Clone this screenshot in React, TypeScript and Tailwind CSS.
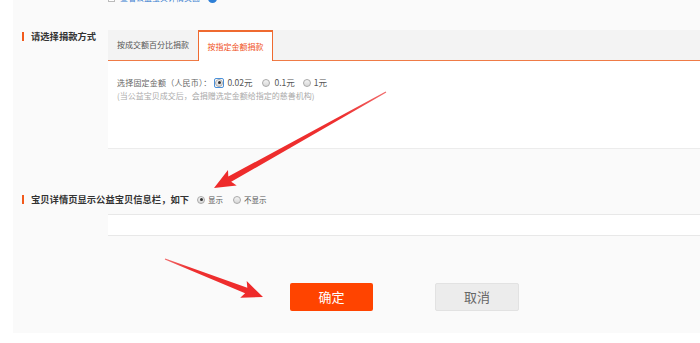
import React from "react";

const font = { fontFamily: '"Noto Sans CJK SC", "Noto Sans", sans-serif' };

function arrowPoints(tx: number, ty: number, hx: number, hy: number, head: number, bw: number, hw: number) {
  const dx = hx - tx;
  const dy = hy - ty;
  const len = Math.sqrt(dx * dx + dy * dy);
  const ux = dx / len;
  const uy = dy / len;
  const nx = -uy;
  const ny = ux;
  const bx = hx - ux * head;
  const by = hy - uy * head;
  const bx2 = hx - ux * (head + 3);
  const by2 = hy - uy * (head + 3);
  const pts = [
    [tx + nx * 0.6, ty + ny * 0.6],
    [bx + nx * bw, by + ny * bw],
    [bx2 + nx * hw, by2 + ny * hw],
    [hx, hy],
    [bx2 - nx * hw, by2 - ny * hw],
    [bx - nx * bw, by - ny * bw],
    [tx - nx * 0.6, ty - ny * 0.6],
  ];
  return pts.map((p) => `${p[0].toFixed(1)},${p[1].toFixed(1)}`).join(" ");
}

function Radio({ checked = false, focus = false }: { checked?: boolean; focus?: boolean }) {
  const dot = (
    <span className="w-[8px] h-[8px] rounded-full border border-[#a9a9a9] bg-gradient-to-b from-[#f4f4f4] to-[#d8d8d8] flex items-center justify-center">
      {checked && <span className="w-[3px] h-[3px] rounded-full bg-[#333]" />}
    </span>
  );
  if (focus) {
    return (
      <span className="w-[10px] h-[10px] rounded-[2px] border border-[#4a90d9] flex items-center justify-center">
        {dot}
      </span>
    );
  }
  return dot;
}

export default function App() {
  return (
    <div className="relative w-[700px] h-[343px] bg-white overflow-hidden" style={font}>
      <div className="ml-[13px] h-[333px] bg-[#fafafa] flex flex-col">
        {/* cut-off top line */}
        <div className="h-[30px] overflow-hidden pl-[95px]">
          <div className="-mt-[8px] flex items-center gap-[5px] h-[12px]">
            <span className="w-[7px] h-[7px] border border-[#bbb] bg-white" />
            <span className="text-[8px] leading-[12px] text-[#3a7fd0]">查看公益宝贝详情页面</span>
            <span className="ml-[3px] w-[9px] h-[9px] rounded-full bg-[#2e7fd6]" />
          </div>
        </div>

        {/* row 1 */}
        <div className="flex">
          <div className="w-[95px] pl-[9px] pt-[1px] flex items-start">
            <span className="w-[2px] h-[9px] bg-[#f25a1c] mt-[1px]" />
            <span className="ml-[7px] text-[9.3px] leading-[11px] font-bold text-[#333]">请选择捐款方式</span>
          </div>
          <div className="flex-1 flex flex-col">
            <div className="h-[31px] bg-[#f3f3f3] border-b border-[#ef7b46] flex items-end">
              <div className="w-[90px] h-full flex items-center justify-center text-[8px] text-[#555]">按成交额百分比捐款</div>
              <div className="w-[75px] h-[31px] -mb-[1px] bg-white border-t-2 border-x border-[#ef6a30] flex items-center justify-center text-[8px] text-[#f0501a]">
                按指定金额捐款
              </div>
            </div>
            <div className="h-[88px] bg-white border-b border-[#ececec] pl-[9px] pt-[16px]">
              <div className="flex items-center h-[11px] text-[8px] text-[#666]">
                <span className="tracking-[0.2px]">选择固定金额（人民币）：</span>
                <span className="ml-[3px]"><Radio checked focus /></span>
                <span className="ml-[3px] text-[8.5px] text-[#555]">0.02元</span>
                <span className="ml-[10px]"><Radio /></span>
                <span className="ml-[4px] text-[8.5px] text-[#555]">0.1元</span>
                <span className="ml-[8px]"><Radio /></span>
                <span className="ml-[3px] text-[8.5px] text-[#555]">1元</span>
              </div>
              <div className="mt-[2px] h-[11px] leading-[11px] text-[8px] text-[#aaa]">(当公益宝贝成交后，会捐赠选定金额给指定的慈善机构)</div>
            </div>
          </div>
        </div>

        {/* row 2 */}
        <div className="mt-[45px] flex items-center h-[11px]">
          <div className="pl-[9px] flex items-center">
            <span className="w-[2px] h-[9px] bg-[#f25a1c]" />
            <span className="ml-[7px] text-[9.3px] leading-[11px] font-bold text-[#333]">宝贝详情页显示公益宝贝信息栏，如下</span>
          </div>
          <span className="ml-[8px]"><Radio checked /></span>
          <span className="ml-[3px] text-[7.5px] text-[#555]">显示</span>
          <span className="ml-[10px]"><Radio /></span>
          <span className="ml-[3px] text-[7.5px] text-[#555]">不显示</span>
        </div>

        <div className="mt-[9px] ml-[95px] h-[22px] bg-white border-y border-[#e8e8e8]" />

        {/* buttons */}
        <div className="mt-[47px] flex pl-[277px]">
          <button className="w-[83px] h-[28px] rounded-[2px] bg-[#ff4400] text-white text-[13px] leading-[28px]">确定</button>
          <button className="ml-[62px] w-[84px] h-[28px] rounded-[2px] bg-[#ececec] border border-[#e2e2e2] text-[#666] text-[13px] leading-[26px]">取消</button>
        </div>
      </div>

      {/* annotation arrows */}
      <svg className="absolute left-0 top-0 pointer-events-none" width="700" height="343" viewBox="0 0 700 343">
        <defs>
          <linearGradient id="g1" x1="385" y1="93" x2="214" y2="188" gradientUnits="userSpaceOnUse">
            <stop offset="0" stopColor="#f06a6a" />
            <stop offset="0.25" stopColor="#ee3030" />
            <stop offset="1" stopColor="#ee2a2a" />
          </linearGradient>
          <linearGradient id="g2" x1="166" y1="259" x2="263" y2="297" gradientUnits="userSpaceOnUse">
            <stop offset="0" stopColor="#f06a6a" />
            <stop offset="0.25" stopColor="#ee3030" />
            <stop offset="1" stopColor="#ee2a2a" />
          </linearGradient>
        </defs>
        <polygon points={arrowPoints(386, 92, 214, 188, 18, 3, 9)} fill="url(#g1)" />
        <polygon points={arrowPoints(165, 259, 263, 297, 18, 3, 9)} fill="url(#g2)" />
      </svg>
    </div>
  );
}
